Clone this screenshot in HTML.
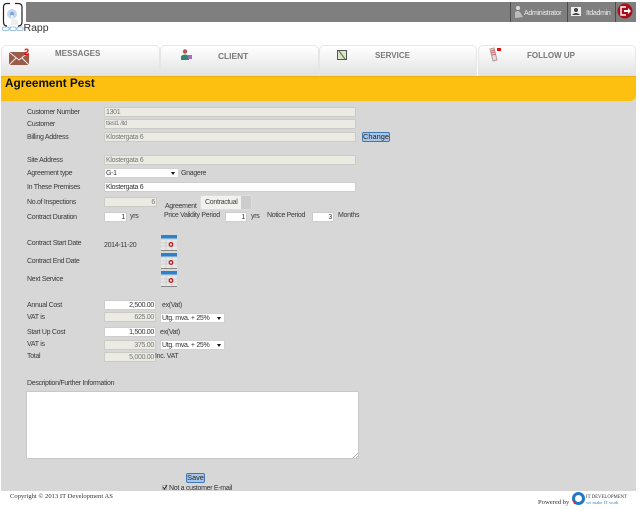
<!DOCTYPE html>
<html><head><meta charset="utf-8"><style>
html,body{margin:0;padding:0;background:#fff;width:641px;height:509px;overflow:hidden}
body{position:relative;font-family:"Liberation Sans",sans-serif;font-size:7px;color:#333}
#w{position:absolute;left:0;top:0;width:641px;height:509px;filter:blur(.35px)}
.a,.l,.i,.s,.t{position:absolute;box-sizing:border-box;white-space:nowrap}
.l,.t,.i,.s,.c{letter-spacing:-.3px}
.l{left:27px;line-height:11px;height:11px;color:#3a3a3a}
.t{line-height:11px;height:11px;color:#3a3a3a}
.i{height:10px;line-height:9px;border:1px solid #cdcdcd;background:#fff;padding:0 1px;color:#333;border-radius:1px}
.d{background:#ebebe4;color:#777;border-color:#cacac6}
.r{text-align:right}
.s{height:10px;line-height:9px;border:1px solid #d2d2d2;background:#fff;padding:0 1px;color:#333}
.s:after{content:"";position:absolute;right:3px;top:3px;border:2px solid transparent;border-top:3px solid #111;border-bottom:0}
.tab{position:absolute;top:45px;height:31px;box-sizing:border-box;border:1px solid #e6e6e6;border-bottom:0;border-radius:5px 5px 0 0;background:linear-gradient(#fff,#e2e2e2)}
.tt{position:absolute;font-weight:bold;font-size:8px;color:#777;line-height:10px;white-space:nowrap}
.btn{position:absolute;box-sizing:border-box;border:1px solid #3f78b5;background:#a9c6e6;border-radius:2px;color:#222;font-size:7.400px;line-height:8px;text-align:center}
.sep{position:absolute;top:2px;height:20px;width:1px;background:#4c4c4c}
.cal{position:absolute;left:161px;width:16px;height:16px}
.f{font-family:'Liberation Serif',serif;letter-spacing:0}
</style></head><body><div id="w">
<div class="a" style="left:26px;top:2px;width:610px;height:20px;background:#7f7f7f"></div>
<div class="sep" style="left:510px"></div><div class="sep" style="left:567px"></div><div class="sep" style="left:615px"></div>
<svg class="a" style="left:514px;top:5px" width="10" height="14" viewBox="0 0 10 14"><circle cx="4" cy="3" r="2" fill="#ddd"/><path d="M1 13V7q3-2 5 0l3 5z" fill="#bbb"/></svg>
<div class="t" style="left:524px;top:8px;color:#eee">Administrator</div>
<div class="a" style="left:571px;top:7px;width:10px;height:9px;background:#eee"><svg width="10" height="9" style="display:block"><circle cx="5" cy="3" r="2" fill="#444"/><path d="M1 8q4-4 8 0z" fill="#444"/></svg></div>
<div class="t" style="left:586px;top:8px;color:#eee">Itdadmin</div>
<svg class="a" style="left:617px;top:3px" width="16" height="16" viewBox="0 0 16 16"><circle cx="8" cy="8" r="7.500" fill="#a5101c"/><path d="M9 4H4v8h5" fill="none" stroke="#fff" stroke-width="1.400"/><path d="M7 7h4V5l3 3-3 3V9H7z" fill="#fff"/></svg>

<svg class="a" style="left:2px;top:2px" width="22" height="30" viewBox="0 0 22 30"><path d="M5 1.500Q1.500 1.500 1.500 5V20Q1.500 24 5 24M16 1.500Q20 1.500 20 5V20Q20 24 16 24M5 1.500h3M13 1.500h3" fill="none" stroke="#222" stroke-width="1.200"/><circle cx="10" cy="12" r="5" fill="#c5d8ee"/><circle cx="10" cy="12" r="2.200" fill="#7ea6d8"/><path d="M9 13h2l1 4 4 1v5H9z" fill="#eee"/><rect x="0.500" y="25" width="6.500" height="3.500" rx="1.200" fill="none" stroke="#7fb2e2" stroke-width=".8"/><rect x="8" y="25" width="6" height="3.500" rx="1.200" fill="none" stroke="#7fb2e2" stroke-width=".8"/><rect x="15" y="25" width="6" height="3.500" rx="1.200" fill="none" stroke="#7fb2e2" stroke-width=".8"/></svg>
<div class="t" style="left:23.500px;top:22px;font-size:10.500px;line-height:12px;height:12px;color:#333;letter-spacing:0">Rapp</div>

<div class="tab" style="left:1px;width:159px"></div>
<div class="tab" style="left:160px;width:159px"></div>
<div class="tab" style="left:319px;width:158px"></div>
<div class="tab" style="left:478px;width:158px"></div>
<svg class="a" style="left:8px;top:48px" width="22" height="18" viewBox="0 0 22 18"><rect x="1" y="4" width="20" height="13" fill="#9c5a48"/><path d="M1 4l10 8 10-8M1 17l7-7M21 17l-7-7" fill="none" stroke="#eee" stroke-width="1"/><text x="16" y="7" font-size="9" font-weight="bold" fill="#e00" font-family="Liberation Sans">2</text></svg>
<div class="tt" style="left:55px;top:49px">MESSAGES</div>
<svg class="a" style="left:180px;top:49px" width="13" height="12" viewBox="0 0 13 12"><circle cx="5" cy="2.500" r="2.200" fill="#b55"/><path d="M1 11V7q4-3 8 0v4z" fill="#2e8a6a"/><rect x="8" y="6" width="4" height="4" fill="#a070c0"/></svg>
<div class="tt" style="left:218px;top:51px;font-size:8.400px">CLIENT</div>
<svg class="a" style="left:336px;top:49px" width="12" height="12" viewBox="0 0 12 12"><rect x="1.500" y="1.500" width="9" height="9" fill="#dfe3cf" stroke="#555"/><path d="M3 2l6 8" stroke="#4c8a3a" stroke-width="1.200"/></svg>
<div class="tt" style="left:375px;top:51px">SERVICE</div>
<svg class="a" style="left:488px;top:46px" width="14" height="16" viewBox="0 0 14 16"><path d="M2 3l4-1 3 12-4 1z" fill="#ddd" stroke="#b99"/><path d="M3 5l4-1M3 7l4-1M4 9l4-1" stroke="#c66"/><rect x="9" y="2" width="4" height="3" fill="#e01010"/></svg>
<div class="tt" style="left:527px;top:51px">FOLLOW UP</div>

<div class="a" style="left:1px;top:76px;width:635px;height:415px;background:#d7d7d7"></div>
<div class="a" style="left:1px;top:76px;width:635px;height:25px;background:#fdc010;border-radius:0 0 6px 0;border-top:1px solid #eab010"></div>
<div class="a" style="left:5px;top:76px;font-weight:bold;font-size:11.800px;line-height:14px;color:#111">Agreement Pest</div>

<div class="l" style="top:107px">Customer Number</div><div class="i d" style="left:104px;top:107px;width:252px">1301</div>
<div class="l" style="top:119px">Customer</div><div class="i d" style="left:104px;top:119px;width:252px;font-size:6px">ttest1 /itd</div>
<div class="l" style="top:132px">Billing Address</div><div class="i d" style="left:104px;top:132px;width:252px">Klostergata 6</div>
<div class="btn" style="left:362px;top:132px;width:28px;height:10px">Change</div>
<div class="l" style="top:155px">Site Address</div><div class="i d" style="left:104px;top:155px;width:252px">Klostergata 6</div>
<div class="l" style="top:168px">Agreement type</div><div class="s" style="left:104px;top:168px;width:75px">G-1</div><div class="t" style="left:181px;top:168px">Gnagere</div>
<div class="l" style="top:182px">In These Premises</div><div class="i" style="left:104px;top:182px;width:252px">Klostergata 6</div>
<div class="l" style="top:197px">No.of Inspections</div><div class="i d r" style="left:104px;top:197px;width:53px">6</div>
<div class="t" style="left:165px;top:201px">Agreement</div>
<div class="a c" style="left:200px;top:195px;width:52px;height:15px;background:#f1f1ee;border:1px solid #ddd;border-radius:2px;line-height:13px;padding-left:4px;color:#444">Contractual<div class="a" style="right:0;top:0;width:10px;height:13px;background:#ccc"></div></div>
<div class="l" style="top:212px">Contract Duration</div><div class="i r" style="left:104px;top:212px;width:23px">1</div><div class="t" style="left:130px;top:211px">yrs</div>
<div class="t" style="left:164px;top:210px">Price Validity Period</div><div class="i r" style="left:225px;top:212px;width:22px">1</div><div class="t" style="left:251px;top:211px">yrs</div>
<div class="t" style="left:267px;top:210px">Notice Period</div><div class="i r" style="left:312px;top:212px;width:22px">3</div><div class="t" style="left:338px;top:210px">Months</div>

<div class="l" style="top:238px">Contract Start Date</div><div class="t" style="left:104px;top:240px">2014-11-20</div>
<div class="l" style="top:256px">Contract End Date</div>
<div class="l" style="top:274px">Next Service</div>
<svg class="cal" style="top:235px" viewBox="0 0 16 16"><rect width="16" height="3.500" fill="#2a82cc"/><rect y="5" width="16" height="10" fill="#e6e6e6"/><path d="M0 8h16M0 11h16M5 5v10M11 5v10" stroke="#bbb" stroke-width=".5"/><circle cx="10" cy="9.500" r="1.800" fill="none" stroke="#c02020" stroke-width="1.300"/><rect y="15" width="16" height="1" fill="#888"/></svg>
<svg class="cal" style="top:253px" viewBox="0 0 16 16"><rect width="16" height="3.500" fill="#2a82cc"/><rect y="5" width="16" height="10" fill="#e6e6e6"/><path d="M0 8h16M0 11h16M5 5v10M11 5v10" stroke="#bbb" stroke-width=".5"/><circle cx="10" cy="9.500" r="1.800" fill="none" stroke="#c02020" stroke-width="1.300"/><rect y="15" width="16" height="1" fill="#888"/></svg>
<svg class="cal" style="top:271px" viewBox="0 0 16 16"><rect width="16" height="3.500" fill="#2a82cc"/><rect y="5" width="16" height="10" fill="#e6e6e6"/><path d="M0 8h16M0 11h16M5 5v10M11 5v10" stroke="#bbb" stroke-width=".5"/><circle cx="10" cy="9.500" r="1.800" fill="none" stroke="#c02020" stroke-width="1.300"/><rect y="15" width="16" height="1" fill="#888"/></svg>

<div class="l" style="top:300px">Annual Cost</div><div class="i r" style="left:104px;top:300px;width:52px">2,500.00</div><div class="t" style="left:162px;top:300px">ex(Vat)</div>
<div class="l" style="top:312px">VAT is</div><div class="i d r" style="left:104px;top:312px;width:52px">625.00</div><div class="s" style="left:160px;top:313px;width:65px">Utg. mva. + 25%</div>
<div class="l" style="top:327px">Start Up Cost</div><div class="i r" style="left:104px;top:327px;width:52px">1,500.00</div><div class="t" style="left:160px;top:327px">ex(Vat)</div>
<div class="l" style="top:339px">VAT is</div><div class="i d r" style="left:104px;top:340px;width:52px">375.00</div><div class="s" style="left:160px;top:340px;width:65px">Utg. mva. + 25%</div>
<div class="l" style="top:351px">Total</div><div class="i d r" style="left:104px;top:352px;width:52px">5,000.00</div><div class="t" style="left:155px;top:351px">Inc. VAT</div>

<div class="l" style="top:378px">Description/Further Information</div>
<div class="a" style="left:26px;top:391px;width:333px;height:68px;background:#fff;border:1px solid #c8c8c8"></div>
<svg class="a" style="left:353px;top:453px" width="5" height="5"><path d="M0 5L5 0M3 5L5 3" stroke="#999" stroke-width=".7"/></svg>

<div class="btn" style="left:186px;top:473px;width:19px;height:10px">Save</div>
<div class="a" style="left:162px;top:485px;width:5px;height:5px;background:#eee;border:1px solid #aaa"></div>
<svg class="a" style="left:162px;top:484px" width="6" height="6"><path d="M1 3l1.500 2L5 1" fill="none" stroke="#222" stroke-width="1"/></svg>
<div class="t" style="left:169px;top:483px;color:#333">Not a customer E-mail</div>

<div class="t f" style="left:10px;top:491px;font-size:6.600px;color:#333">Copyright © 2013 IT Development AS</div>
<div class="t f" style="left:538px;top:497px;font-size:6.600px;color:#333">Powered by</div>
<svg class="a" style="left:571px;top:491px" width="15" height="15" viewBox="0 0 15 15"><circle cx="7.500" cy="7.500" r="5" fill="none" stroke="#1f78c8" stroke-width="3"/><path d="M1 8l5 5-3 0z" fill="#d8302a"/></svg>
<div class="t f" style="left:586px;top:492px;font-size:4.800px;color:#333">IT DEVELOPMENT</div>
<div class="t f" style="left:586px;top:497px;font-size:4.600px;color:#3a80c0">we make IT work</div>
</div></body></html>
